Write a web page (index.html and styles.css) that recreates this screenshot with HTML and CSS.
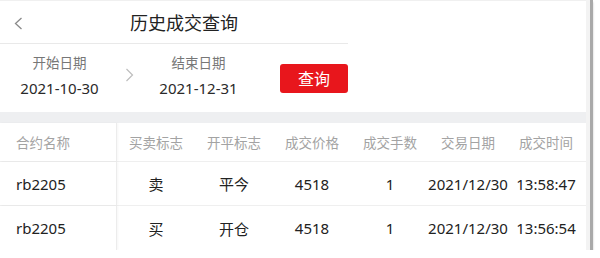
FILE: index.html
```html
<!DOCTYPE html>
<html lang="zh-CN">
<head>
<meta charset="utf-8">
<title>历史成交查询</title>
<link rel="stylesheet" href="styles.css">
</head>
<body>
<div class="frame">
  <div class="panel">
    <div class="head">
      <div class="nav">
        <svg class="back" width="9" height="13" viewBox="0 0 9 13"><path d="M7.5 1 L1.5 6.5 L7.5 12" fill="none" stroke="#8a8a8a" stroke-width="1.3"/></svg>
        <div class="title">历史成交查询</div>
      </div>
    </div>
    <div class="query">
      <div class="date date-start">
        <div class="date-label">开始日期</div>
        <div class="date-value">2021-10-30</div>
      </div>
      <div class="sep">
        <svg width="9" height="14" viewBox="0 0 9 14"><path d="M1.5 1 L7.5 7 L1.5 13" fill="none" stroke="#bdbdbd" stroke-width="1.2"/></svg>
      </div>
      <div class="date date-end">
        <div class="date-label">结束日期</div>
        <div class="date-value">2021-12-31</div>
      </div>
      <button class="btn">查询</button>
    </div>
    <div class="band"></div>
    <div class="table">
      <div class="row row-head">
        <div class="cell first">合约名称</div>
        <div class="cell">买卖标志</div>
        <div class="cell">开平标志</div>
        <div class="cell">成交价格</div>
        <div class="cell">成交手数</div>
        <div class="cell">交易日期</div>
        <div class="cell">成交时间</div>
      </div>
      <div class="row">
        <div class="cell first">rb2205</div>
        <div class="cell">卖</div>
        <div class="cell">平今</div>
        <div class="cell">4518</div>
        <div class="cell">1</div>
        <div class="cell">2021/12/30</div>
        <div class="cell">13:58:47</div>
      </div>
      <div class="row last">
        <div class="cell first">rb2205</div>
        <div class="cell">买</div>
        <div class="cell">开仓</div>
        <div class="cell">4518</div>
        <div class="cell">1</div>
        <div class="cell">2021/12/30</div>
        <div class="cell">13:56:54</div>
      </div>
    </div>
  </div>
</div>
</body>
</html>
```

FILE: styles.css
```css
html, body {
  margin: 0;
  padding: 0;
  background: #ffffff;
}
body {
  font-family: "Noto Sans", "Noto Sans CJK SC", sans-serif;
  color: #222;
}
.frame {
  width: 586px;
  height: 250px;
  padding-right: 4px;
  background: #f3f3f3;
  border-right: 3px solid #a9a9a9;
  box-shadow: 0 2px 2px rgba(0, 0, 0, 0.22);
}
.panel {
  width: 586px;
  height: 250px;
  background: #fff;
  border-top: 1px solid #f0f0f0;
  box-sizing: border-box;
  overflow: hidden;
}
.head {
  width: 348px;
  border-bottom: 1px solid #e9e9e9;
}
.nav {
  height: 42px;
  display: flex;
  align-items: center;
}
.back {
  margin-left: 14px;
  margin-top: 3px;
  display: block;
}
.title {
  margin-left: 107px;
  font-family: "Noto Sans CJK SC", sans-serif;
  font-size: 18px;
  line-height: 24px;
  color: #222;
}
.query {
  height: 68px;
  display: flex;
  align-items: flex-start;
  padding-top: 8px;
  box-sizing: border-box;
}
.date {
  width: 119px;
  display: flex;
  flex-direction: column;
  align-items: center;
}
.date-end {
  width: 119px;
}
.date-label {
  font-family: "Noto Sans CJK SC", sans-serif;
  font-size: 13.5px;
  line-height: 20px;
  color: #777;
}
.date-value {
  margin-top: 5px;
  font-size: 15px;
  line-height: 22px;
  color: #2a2a2a;
}
.sep {
  width: 20px;
  display: flex;
  justify-content: center;
  padding-top: 16px;
}
.sep svg {
  display: block;
}
.btn {
  margin-left: 22px;
  margin-top: 12px;
  width: 68px;
  height: 29px;
  border: 0;
  border-radius: 3px;
  background: #e8161c;
  color: #fff;
  font-family: "Noto Sans CJK SC", sans-serif;
  font-size: 16px;
  line-height: 29px;
  padding: 0;
}
.band {
  height: 11px;
  background: #eeeff1;
}
.table {
  display: flex;
  flex-direction: column;
}
.row {
  display: grid;
  grid-template-columns: 117px repeat(6, 78px);
  height: 44px;
  border-bottom: 1px solid #efefef;
  box-sizing: border-box;
  font-size: 15px;
  color: #222;
}
.row.last {
  border-bottom: 0;
}
.row-head {
  height: 39px;
  font-family: "Noto Sans CJK SC", sans-serif;
  font-size: 13.5px;
  color: #a3a3a3;
}
.cell {
  display: flex;
  align-items: center;
  justify-content: center;
  white-space: nowrap;
}
.row .cell:not(.first) {
  font-family: "Noto Sans", "Noto Sans CJK SC", sans-serif;
}
.row-head .cell {
  font-family: "Noto Sans CJK SC", sans-serif;
}
.cell.first {
  justify-content: flex-start;
  padding-left: 16px;
  border-right: 1px solid #ececec;
  box-shadow: 1px 0 2px rgba(0, 0, 0, 0.04);
}
```
